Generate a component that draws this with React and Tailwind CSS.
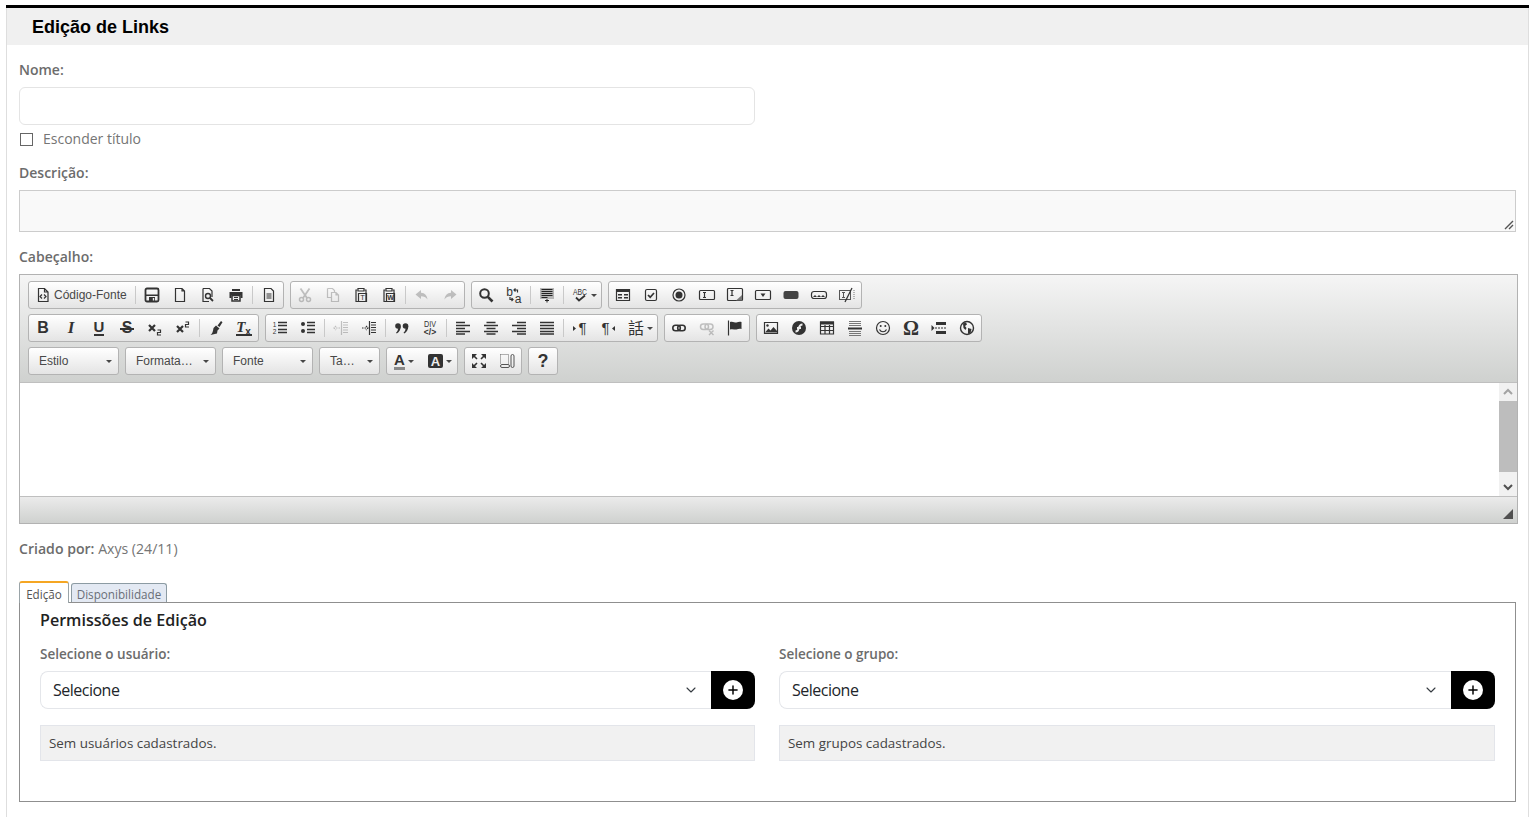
import React from 'react';
import { ChevronDown, Plus } from 'lucide-react';

const S = { fill: 'none', stroke: 'currentColor', strokeWidth: 1.2 };
const T = (props) => <text fill="currentColor" textAnchor="middle" fontFamily="Liberation Sans, sans-serif" {...props} />;

// editor toolbar icons, all on a 16x16 grid
const ICONS = {
  source: <><path {...S} d="M3.500 1.500h6l3.500 3.500v9.500h-9.500zM9.500 1.500v3.500h3.500" /><path {...S} d="M7 7.500l-2 2 2 2M9 7.500l2 2-2 2" /></>,
  save: <><rect {...S} strokeWidth="1.800" x="1.500" y="1.500" width="13" height="13" rx="1.500" /><path fill="currentColor" d="M2 7.500h12v1.500H2zM5 10h6v4.500H5z" /><path fill="#eee" d="M8.800 11h1.400v2.500H8.800z" /></>,
  newpage: <path {...S} d="M3.500 1.500h6.500l2.500 2.500v10.500h-9z M10 1.500v2.500h2.500" />,
  preview: <><path {...S} d="M3 1.500h6.500l2.500 2.500v6M3 1.500v13h6" /><circle {...S} strokeWidth="1.400" cx="8" cy="9" r="2.500" /><path {...S} strokeWidth="1.800" d="M10 11l3 3" /></>,
  print: <><path fill="currentColor" d="M4 2h8v2H4zM1.500 5h13v6h-2V8h-9v3h-2z" /><path {...S} strokeWidth="1.500" d="M4 8.500h8v5.500H4z" /><path {...S} d="M6 10.500h4M6 12.500h4" /></>,
  templates: <><path {...S} d="M3.500 1.500h6.500l2.500 2.500v10.500h-9z" /><path {...S} d="M5.500 7h5M5.500 9h5M5.500 11h5" /></>,
  cut: <><circle {...S} strokeWidth="1.500" cx="4.500" cy="12.500" r="2" /><circle {...S} strokeWidth="1.500" cx="11.500" cy="12.500" r="2" /><path {...S} strokeWidth="1.800" d="M3.500 1.500l6.500 9.500M12.500 1.500L6 11" /></>,
  copy: <path {...S} d="M2.500 1.500h5l2 2v2M2.500 1.500v9h3.500M6.500 5.500h4.500l2.500 2.500v6.500h-7zM11 5.500V8h2.500" />,
  pastetext: <><path {...S} d="M4.500 3H3v11.500h10V3h-1.500" /><path {...S} d="M5 1.500h6v2.500H5z" /><path {...S} d="M5.500 6.500h8v8h-8z" /><T x="9.500" y="13" fontSize="7.500">T</T></>,
  pasteword: <><path {...S} d="M4.500 3H3v11.500h10V3h-1.500" /><path {...S} d="M5 1.500h6v2.500H5z" /><path {...S} d="M5.500 6.500h8v8h-8z" /><T x="9.500" y="13" fontSize="7" fontWeight="700">W</T></>,
  undo: <path fill="currentColor" d="M7 3L1.500 7.500 7 12V9.300c3 0 5 1 6.500 3.200C13 8.500 11 6 7 5.800z" />,
  redo: <path fill="currentColor" d="M9 3l5.500 4.500L9 12V9.300c-3 0-5 1-6.500 3.200C3 8.500 5 6 9 5.800z" />,
  find: <><circle {...S} strokeWidth="2" cx="6.500" cy="6.500" r="4.300" /><path {...S} strokeWidth="2.600" d="M9.800 9.800L14.500 14.500" /></>,
  replace: <><T x="3.500" y="9" fontSize="12">b</T><T x="12" y="16" fontSize="12">a</T><path {...S} d="M8 3h3.500v2.500M9.500 1.500L8 3l1.500 1.500M7 12.500H4V10M5.500 11L7 12.500 5.500 14" /></>,
  selectall: <><path fill="#b5b5b5" d="M1 1h14v11H1z" /><path stroke="#222" d="M2.500 2.500h11M2.500 4.500h11M2.500 6.500h11M2.500 8.500h11M2.500 10.500h6" /><path stroke="#222" d="M6 13.500h4M8 12v3.500" /></>,
  spell: <><T x="8" y="8" fontSize="9" textLength="14" lengthAdjust="spacingAndGlyphs">ABC</T><path {...S} strokeWidth="1.800" d="M4 10.500l3 3 6-5" /></>,
  form: <><path {...S} d="M1.500 2.500h13v11h-13z" /><path fill="currentColor" d="M2 3h12v2H2zM3 7h4v1.500H3zM9 7h4v1.500H9zM3 10h4v1.500H3zM9 10h4v1.500H9z" /></>,
  checkbox: <><rect {...S} x="2.500" y="2.500" width="11" height="11" rx="1.500" /><path {...S} strokeWidth="1.700" d="M5 8l2.200 2.200L11 6" /></>,
  radio: <><circle {...S} cx="8" cy="8" r="6" /><circle fill="currentColor" cx="8" cy="8" r="3.500" /></>,
  textfield: <><rect {...S} x="0.500" y="3.500" width="15" height="9" rx="1" /><path {...S} d="M4 5.500h3M4 10.500h3M5.500 5.500v5" /></>,
  textarea: <><rect {...S} x="0.500" y="1.500" width="15" height="12" rx="1" /><path {...S} d="M3.500 3.500h3M3.500 8.500h3M5 3.500v5" /><path fill="#777" d="M15 8v5.500H9z" /></>,
  select: <><rect {...S} x="0.500" y="3.500" width="15" height="9" rx="1" /><path fill="currentColor" d="M5.500 6.500h5L8 10z" /></>,
  button: <rect fill="#444" x="0.500" y="4" width="15" height="8" rx="2" />,
  imagebutton: <><rect {...S} x="0.500" y="4.500" width="15" height="7" rx="2.500" /><path fill="currentColor" d="M2 10l2-2 2 2 2-2 2 2 2-2 2 2z" /></>,
  hiddenfield: <><rect stroke="#555" fill="none" x="0.500" y="3.500" width="11" height="9" /><path stroke="#555" fill="none" d="M3 5.500h3M3 10.500h3M4.500 5.500v5" /><path {...S} d="M13 1L6 15" /><path stroke="#777" strokeDasharray="1 1" d="M15 3v10" /></>,
  sub: <><path {...S} strokeWidth="2.200" d="M2 5l6 6M8 5l-6 6" /><path {...S} d="M10.500 10h3v2.500h-3v2.500h3.500" /></>,
  sup: <><path {...S} strokeWidth="2.200" d="M2 6l6 6M8 6l-6 6" /><path {...S} d="M10.500 2h3v2.500h-3V7h3.500" /></>,
  brush: <><path fill="currentColor" d="M8 5.500l3.500 3-2 2-.500 3L2.500 15c2-1.500 2.500-3.500 3-7z" /><path fill="currentColor" d="M9.500 5.500L13 1l1.500 1.200-3 4.800z" /></>,
  numlist: <><T x="2.500" y="7" fontSize="6.500">1</T><T x="2.500" y="14" fontSize="6.500">2</T><path {...S} strokeWidth="1.500" d="M6 2.500h9M6 5.500h9M6 9.500h9M6 12.500h9" /></>,
  bullist: <><circle fill="currentColor" cx="3" cy="4" r="2" /><circle fill="currentColor" cx="3" cy="11" r="2" /><path {...S} strokeWidth="1.500" d="M7 2.500h8M7 5.500h8M7 9.500h8M7 12.500h8" /></>,
  outdent: <><path {...S} d="M8.500 1v14M10 2.500h5M10 5h5M10 7.500h5M10 10h5M10 12.500h5" /><path {...S} strokeDasharray="1.500 1" d="M7 8H1M3 6L1 8l2 2" /></>,
  indent: <><path {...S} d="M8.500 1v14M10 2.500h5M10 5h5M10 7.500h5M10 10h5M10 12.500h5" /><path {...S} strokeDasharray="1.500 1" d="M1 8h6M5 6l2 2-2 2" /></>,
  quote: <><circle fill="currentColor" cx="4" cy="6" r="2.800" /><path fill="currentColor" d="M6.800 6c0 3.500-1.500 6-4 7.500L2 12.700C3.500 11.500 4 10 4 8.500z" /><circle fill="currentColor" cx="11.500" cy="6" r="2.800" /><path fill="currentColor" d="M14.300 6c0 3.500-1.500 6-4 7.500l-.800-.800c1.500-1.200 2-2.700 2-4.200z" /></>,
  div: <><T x="8" y="7" fontSize="9" textLength="12" lengthAdjust="spacingAndGlyphs">DIV</T><T x="8" y="15" fontSize="8.500" fontWeight="700">{'</>'}</T></>,
  left: <path {...S} strokeWidth="1.500" d="M1 2.500h9M1 5.500h14M1 8.500h9M1 11.500h14M1 14h9" />,
  center: <path {...S} strokeWidth="1.500" d="M3.500 2.500h9M1 5.500h14M3.500 8.500h9M1 11.500h14M3.500 14h9" />,
  right: <path {...S} strokeWidth="1.500" d="M6 2.500h9M1 5.500h14M6 8.500h9M1 11.500h14M6 14h9" />,
  justify: <path {...S} strokeWidth="1.500" d="M1 2.500h14M1 5.500h14M1 8.500h14M1 11.500h14M1 14h14" />,
  ltr: <><path fill="currentColor" d="M1 6l3 2.500L1 11z" /><T x="10.500" y="13" fontSize="15">¶</T></>,
  rtl: <><T x="5.500" y="13" fontSize="15">¶</T><path fill="currentColor" d="M15 6l-3 2.500 3 2.500z" /></>,
  language: <T x="8" y="14" fontSize="16" fontFamily="Noto Sans CJK TC, sans-serif">話</T>,
  link: <><rect {...S} strokeWidth="1.600" x="1.800" y="5.300" width="7.500" height="5.400" rx="2.700" /><rect {...S} strokeWidth="1.600" x="6.700" y="5.300" width="7.500" height="5.400" rx="2.700" /></>,
  unlink: <><rect {...S} strokeWidth="1.500" x="1.500" y="4" width="8" height="5.500" rx="2.700" /><rect {...S} strokeWidth="1.500" x="6" y="4" width="8" height="5.500" rx="2.700" /><path {...S} strokeWidth="1.400" d="M10 10.500l4.500 4.500M14.500 10.500L10 15" /></>,
  anchor: <><path {...S} d="M1.500 0.500v15" /><path fill="currentColor" d="M3 2c3-1 5 1 6.500.500s3-1 5-.500v7c-2-.500-3.500 0-5 .500S6 8.500 3 9.500z" /></>,
  image: <><path {...S} d="M1.500 2.500h13v11h-13z" /><path fill="currentColor" d="M2 12.500l3.500-4 2 2 3-3.500 3.500 4v1.500z" /><circle fill="currentColor" cx="4.500" cy="5.500" r="1.200" /></>,
  flash: <><circle fill="currentColor" cx="8" cy="8" r="7" /><path {...S} stroke="#eee" strokeWidth="1.800" d="M11.500 4.500C8.500 4.500 8 7 7.500 9S6 11.500 4.500 11.500M6 8h4" /></>,
  table: <><path fill="currentColor" d="M1 1.500h14v3H1z" /><path {...S} d="M1.500 2h13v12h-13zM1.500 6.500h13M1.500 10.500h13M6 5v9M10.500 5v9" /></>,
  hr: <><path stroke="#777" d="M2 1.500h12M2 3.500h12M2 5.500h12M2 11.500h12M2 13.500h12M2 15.500h12" /><path stroke="currentColor" strokeWidth="2" d="M1 8.500h14" /></>,
  smiley: <><circle {...S} cx="8" cy="8" r="6.500" /><circle fill="currentColor" cx="5.700" cy="6" r="1" /><circle fill="currentColor" cx="10.300" cy="6" r="1" /><path {...S} d="M4.500 9.500c1.500 3 5.500 3 7 0" /></>,
  pagebreak: <><path fill="currentColor" d="M0.500 5l3 3-3 3z" /><path fill="currentColor" d="M5 2h10v3H5zM5 11h10v3H5z" /><path stroke="currentColor" strokeDasharray="2 1" d="M4 8h11" /></>,
  iframe: <><circle {...S} strokeWidth="1.400" cx="8" cy="8" r="6.500" /><path fill="currentColor" d="M4 3.500l3-1 1 2-2 1.500 1.500 2-1 2-2-2zM9 8l3.500 1-1 4-2.500 1z" /></>,
  maximize: <><path {...S} strokeWidth="1.600" d="M2.500 2.500l3.500 3.500M13.500 2.500L10 6M2.500 13.500L6 10M13.500 13.500L10 10" /><path fill="currentColor" d="M1 1h5L1 6zM15 1h-5l5 5zM1 15h5l-5-5zM15 15h-5l5-5z" /></>,
  blocks: <><path stroke="#666" strokeDasharray="1 1" fill="none" d="M1.500 1.500h8v9M1.500 1.500v9" /><rect stroke="#555" fill="none" x="1.500" y="11.500" width="9" height="3" rx="1.500" /><rect stroke="#555" fill="none" x="12" y="1.500" width="3" height="13" rx="1.500" /></>,
};

const LETTERS = {
  bold: <span className="text-[16px] font-bold leading-4">B</span>,
  italic: <span className="font-['Liberation_Serif',serif] text-[17px] font-bold italic leading-4">I</span>,
  underline: <span className="border-b-2 border-[#333] text-[15px] font-bold leading-[14px]">U</span>,
  strike: (
    <span className="relative text-[16px] font-bold leading-4">
      S
      <span className="absolute left-[-2px] right-[-2px] top-[8px] h-[2px] bg-[#333]" />
    </span>
  ),
  removeformat: (
    <span className="border-b-2 border-[#333] pr-[1px] font-['Liberation_Serif',serif] text-[15px] font-bold italic leading-[14px]">
      T<sub className="font-['Liberation_Sans',sans-serif] text-[10px] not-italic leading-[0]">x</sub>
    </span>
  ),
  question: <span className="text-[18px] font-bold leading-4">?</span>,
  omega: <span className="font-['Liberation_Serif',serif] text-[20px] font-bold leading-4">Ω</span>,
};

const Glyph = ({ name }) => {
  if (LETTERS[name]) return LETTERS[name];
  return <svg width="16" height="16" viewBox="0 0 16 16" className="block overflow-visible">{ICONS[name]}</svg>;
};

const Btn = ({ name, off }) => (
  <div className={`flex h-[26px] w-[28px] items-center justify-center ${off ? 'text-[#474747] opacity-30' : 'text-[#333]'}`}>
    <Glyph name={name} />
  </div>
);

const Sep = () => (
  <div className="flex h-[26px] w-[5px] items-center justify-center">
    <div className="h-[18px] w-px bg-[#c9c9c9]" />
  </div>
);

const Caret = () => <span className="ml-[3px] h-0 w-0 border-x-[3px] border-t-[3px] border-x-transparent border-t-[#474747]" />;

const Drop = ({ name }) => (
  <div className="flex h-[26px] w-[35px] items-center pl-[6px] text-[#333]">
    <Glyph name={name} />
    <Caret />
  </div>
);

const Group = ({ children }) => (
  <div className="flex h-[28px] items-center rounded-[3px] border border-[#b3b3b3] bg-gradient-to-b from-[#ffffff] to-[#e4e4e4]">
    {children}
  </div>
);

const Combo = ({ label, width }) => (
  <div className={`flex h-[28px] items-center justify-between rounded-[3px] border border-[#b3b3b3] bg-gradient-to-b from-[#ffffff] to-[#e4e4e4] pl-[10px] pr-[6px] text-[12px] text-[#484848] ${width}`}>
    <span>{label}</span>
    <Caret />
  </div>
);

const Row = ({ children }) => <div className="flex h-[28px] gap-[6px]">{children}</div>;

const row = (items) =>
  items.map((item, i) => {
    if (item === '|') return <Sep key={i} />;
    if (item.startsWith('^')) return <Btn key={i} name={item.slice(1)} off />;
    if (item.startsWith('v')) return <Drop key={i} name={item.slice(1)} />;
    return <Btn key={i} name={item} />;
  });

const Toolbar = () => (
  <div className="flex flex-col gap-[5px] bg-gradient-to-b from-[#f5f5f5] to-[#cfd1cf] pb-[7px] pl-[8px] pt-[6px] font-['Liberation_Sans',sans-serif]">
    <Row>
      <Group>
        <div className="flex h-[26px] w-[104px] items-center pl-[6px] text-[12px] text-[#484848]">
          <div className="text-[#333]"><Glyph name="source" /></div>
          <span className="ml-[3px]">Código-Fonte</span>
        </div>
        {row(['|', 'save', 'newpage', 'preview', 'print', '|', 'templates'])}
      </Group>
      <Group>{row(['^cut', '^copy', 'pastetext', 'pasteword', '|', '^undo', '^redo'])}</Group>
      <Group>{row(['find', 'replace', '|', 'selectall', '|', 'vspell'])}</Group>
      <Group>{row(['form', 'checkbox', 'radio', 'textfield', 'textarea', 'select', 'button', 'imagebutton', 'hiddenfield'])}</Group>
    </Row>
    <Row>
      <Group>{row(['bold', 'italic', 'underline', 'strike', 'sub', 'sup', '|', 'brush', 'removeformat'])}</Group>
      <Group>{row(['numlist', 'bullist', '|', '^outdent', 'indent', '|', 'quote', 'div', '|', 'left', 'center', 'right', 'justify', '|', 'ltr', 'rtl', 'vlanguage'])}</Group>
      <Group>{row(['link', '^unlink', 'anchor'])}</Group>
      <Group>{row(['image', 'flash', 'table', 'hr', 'smiley', 'omega', 'pagebreak', 'iframe'])}</Group>
    </Row>
    <Row>
      <Combo label="Estilo" width="w-[91px]" />
      <Combo label="Formata…" width="w-[91px]" />
      <Combo label="Fonte" width="w-[91px]" />
      <Combo label="Ta…" width="w-[61px]" />
      <Group>
        <div className="flex h-[26px] w-[35px] items-center pl-[7px] text-[#333]">
          <span className="border-b-[3px] border-[#888] text-[15px] font-bold leading-[14px]">A</span>
          <Caret />
        </div>
        <div className="flex h-[26px] w-[35px] items-center pl-[6px] text-[#333]">
          <span className="flex h-[14px] w-[15px] items-center justify-center rounded-[2px] bg-[#333] text-[13px] font-bold leading-none text-[#eee]">A</span>
          <Caret />
        </div>
      </Group>
      <Group>{row(['maximize', 'blocks'])}</Group>
      <Group>{row(['question'])}</Group>
    </Row>
  </div>
);

const Editor = () => (
  <div className="mt-[7px] mr-[-2px] border border-[#b2b2b2]">
    <Toolbar />
    <div className="flex h-[115px] border-y border-[#bfbfbf] bg-white">
      <div className="flex-1" />
      <div className="flex w-[18px] flex-col bg-[#f1f1f1]">
        <div className="flex h-[18px] items-center justify-center text-[#a3a3a3]">
          <svg width="10" height="10" viewBox="0 0 10 10"><path d="M1 7l4-4 4 4" fill="none" stroke="currentColor" strokeWidth="2" /></svg>
        </div>
        <div className="h-[71px] bg-[#bdbdbd]" />
        <div className="flex flex-1 items-end justify-center pb-[4px] text-[#505050]">
          <svg width="10" height="10" viewBox="0 0 10 10"><path d="M1 3l4 4 4-4" fill="none" stroke="currentColor" strokeWidth="2" /></svg>
        </div>
      </div>
    </div>
    <div className="flex h-[26px] items-end justify-end bg-gradient-to-b from-[#ebebeb] to-[#cfd1cf] pb-[4px] pr-[4px]">
      <div className="h-0 w-0 border-b-[10px] border-l-[10px] border-b-[#505050] border-l-transparent" />
    </div>
  </div>
);

const Picker = ({ label, empty }) => (
  <div>
    <div className="text-[13.5px] font-semibold leading-5 text-[#6c6c6c]">{label}</div>
    <div className="mt-[7px] flex h-[38px]">
      <div className="flex flex-1 items-center justify-between rounded-l-lg border border-r-0 border-[#e4e6ea] bg-white pl-[12px] pr-[12px] text-[#212529]">
        <span className="text-[16px] tracking-[-0.5px]">Selecione</span>
        <ChevronDown size={16} strokeWidth={1.6} className="text-[#343a40]" />
      </div>
      <div className="flex w-[44px] items-center justify-center rounded-r-lg bg-black">
        <div className="flex h-[20px] w-[20px] items-center justify-center rounded-full bg-white text-black">
          <Plus size={14} strokeWidth={2.5} />
        </div>
      </div>
    </div>
    <div className="mt-[16px] flex h-[36px] items-center border border-[#e3e5ea] bg-[#f1f1f1] pl-[8px] pt-[1px] text-[13.4px] text-[#444]">{empty}</div>
  </div>
);

export default function App() {
  return (
    <div className="h-[817px] overflow-hidden bg-white pt-[5px] pl-[6px] pr-[8px] font-['Open_Sans',sans-serif]">
      <div className="h-full border-x border-[#dedede]">
        <div className="-mx-px border-t-[3px] border-black" />
        <div className="flex h-[37px] items-center bg-[#f0f0f0] pl-[25px] pt-[1px] font-['Liberation_Sans',sans-serif] text-[18px] font-bold text-black">
          Edição de Links
        </div>
        <div className="px-[12px]">
          <div className="mt-[15px] text-[14px] font-semibold leading-5 text-[#6c6c6c]">Nome:</div>
          <div className="mt-[7px] h-[38px] w-[736px] rounded-md border border-[#e4e4e4] bg-white" />
          <div className="mt-[4px] flex h-[20px] items-center">
            <span className="ml-[1px] h-[13px] w-[13px] border border-[#666] bg-white" />
            <span className="ml-[10px] mt-[-2px] text-[14px] text-[#757575]">Esconder título</span>
          </div>
          <div className="mt-[14px] text-[14px] font-semibold leading-5 text-[#6c6c6c]">Descrição:</div>
          <div className="relative mt-[7px] h-[42px] border border-[#cccccc] bg-[#f9f9f9]">
            <svg width="10" height="10" viewBox="0 0 10 10" className="absolute bottom-[1px] right-[1px]">
              <path d="M1 9l8-8M5 9l4-4" stroke="#555" strokeWidth="1.400" fill="none" />
            </svg>
          </div>
          <div className="mt-[15px] text-[14px] font-semibold leading-5 text-[#6c6c6c]">Cabeçalho:</div>
          <Editor />
          <div className="mt-[15px] text-[14.1px] leading-5 text-[#757575]">
            <b className="font-semibold text-[#6c6c6c]">Criado por:</b> Axys (24/11)
          </div>
          <div className="mt-[22px] flex h-[21px] items-end">
            <div className="relative z-10 mb-[-1px] flex h-[22px] w-[50px] items-center justify-center rounded-t-[3px] border-x border-[#9aa4a8] border-t-2 border-t-[#f5a623] bg-white pt-[4px] text-[11.7px] leading-none text-[#555]">
              Edição
            </div>
            <div className="ml-[2px] flex h-[19px] w-[96px] items-center justify-center rounded-t-[3px] border-x border-t border-[#8c9ba3] bg-[#e3e9f3] pt-[4px] text-[11.7px] leading-none text-[#6a6f78]">
              Disponibilidade
            </div>
          </div>
          <div className="h-[200px] border border-[#8f8f8f] px-[20px] pt-[6px]">
            <div className="text-[16.1px] font-semibold leading-[22px] text-[#222]">Permissões de Edição</div>
            <div className="mt-[13px] grid grid-cols-[715px_716px] gap-[24px]">
              <Picker label="Selecione o usuário:" empty="Sem usuários cadastrados." />
              <Picker label="Selecione o grupo:" empty="Sem grupos cadastrados." />
            </div>
          </div>
        </div>
      </div>
    </div>
  );
}
